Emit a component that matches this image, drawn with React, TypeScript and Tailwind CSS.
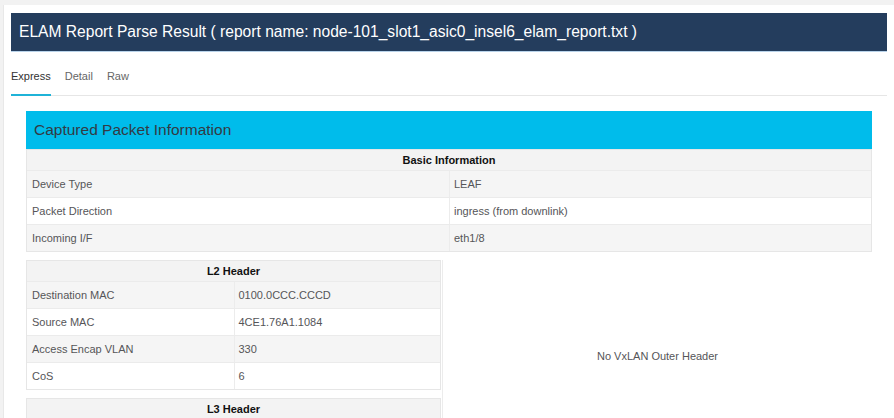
import React from "react";

interface Row {
  label: string;
  value: string;
}

const basicRows: Row[] = [
  { label: "Device Type", value: "LEAF" },
  { label: "Packet Direction", value: "ingress (from downlink)" },
  { label: "Incoming I/F", value: "eth1/8" },
];

const l2Rows: Row[] = [
  { label: "Destination MAC", value: "0100.0CCC.CCCD" },
  { label: "Source MAC", value: "4CE1.76A1.1084" },
  { label: "Access Encap VLAN", value: "330" },
  { label: "CoS", value: "6" },
];

function InfoTable({ title, rows }: { title: string; rows: Row[] }) {
  return (
    <div className="border border-[#e6e6e6] text-[11px] text-[#555558]">
      <div className="h-[20px] flex items-center justify-center bg-[#f3f3f3] font-bold text-[#111]">
        {title}
      </div>
      {rows.map((row, i) => (
        <div
          key={row.label}
          className={`grid grid-cols-2 h-[27px] border-t border-[#ebebeb] ${
            i % 2 === 0 ? "bg-[#f5f5f5]" : "bg-white"
          }`}
        >
          <div className="flex items-center pl-[5px]">{row.label}</div>
          <div className="flex items-center pl-[4px] border-l border-[#ececec]">
            {row.value}
          </div>
        </div>
      ))}
    </div>
  );
}

export default function App() {
  const tabs = ["Express", "Detail", "Raw"];
  return (
    <div
      className="min-h-screen bg-[#f2f2f2] pt-[5px] pl-[3px]"
      style={{ fontFamily: '"Liberation Sans", Arial, sans-serif' }}
    >
      <div className="bg-white px-[7px] pt-[8px] pb-[40px] border-l border-[#e8e8e8]">
        <div className="h-[39px] bg-[#243d5d] border-b border-[#b9d3ea] flex items-center pl-[8px] text-white text-[15.6px]">
          ELAM Report Parse Result ( report name: node-101_slot1_asic0_insel6_elam_report.txt )
        </div>

        <div className="flex mt-[18px] border-b border-[#e6e6e6]">
          {tabs.map((tab, i) => (
            <div
              key={tab}
              className={`mr-[14px] pb-[11px] -mb-px border-b-2 text-[11px] leading-[13px] ${
                i === 0
                  ? "border-[#1fb3d8] text-[#333]"
                  : "border-transparent text-[#666]"
              }`}
            >
              {tab}
            </div>
          ))}
        </div>

        <div className="px-[15px] mt-[15px]">
          <div className="h-[38px] bg-[#00bceb] flex items-center pl-[8px] text-[15.5px] text-[#333a44]">
            Captured Packet Information
          </div>
          <InfoTable title="Basic Information" rows={basicRows} />

          <div className="grid grid-cols-[415px_1fr] gap-x-[1px] mt-[8px]">
            <div className="flex flex-col gap-[8px]">
              <InfoTable title="L2 Header" rows={l2Rows} />
              <InfoTable title="L3 Header" rows={[]} />
            </div>
            <div className="min-h-[192px] border-l border-[#ececec] flex items-center justify-center text-[11px] text-[#555558]">
              No VxLAN Outer Header
            </div>
          </div>
        </div>
      </div>
    </div>
  );
}
